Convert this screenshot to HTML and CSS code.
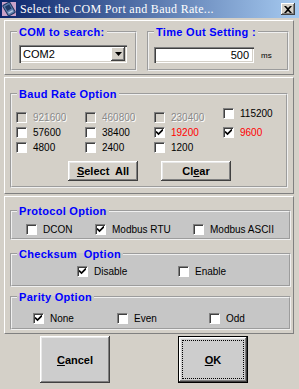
FILE: index.html
```html
<!DOCTYPE html>
<html lang="en">
<head>
<meta charset="UTF-8">
<title>Select the COM Port and Baud Rate</title>
<link rel="stylesheet" href="styles.css">
</head>
<body>
<div class="window">
    <div class="titlebar">
        <svg class="app-icon" width="14" height="14" viewBox="0 0 14 14">
            <rect x="0" y="0" width="14" height="14" fill="#c9a2c8"/>
            <g transform="rotate(-30 7 7)">
                <rect x="3" y="1" width="8" height="12" rx="1" fill="#5c7fae" stroke="#1e3560"/>
                <rect x="4.5" y="3" width="5" height="5" fill="#203a66"/>
                <rect x="4.5" y="9.5" width="5" height="1.5" fill="#b9c9e0"/>
            </g>
        </svg>
        <span class="title">Select the COM Port and Baud Rate...</span>
        <span class="close">
            <svg width="8" height="7" viewBox="0 0 8 7"><path d="M0 0h2l2 2 2-2h2L5 3.5 8 7H6L4 5 2 7H0l3-3.5z" fill="#000"/></svg>
        </span>
    </div>

    <div class="panel top-panel">
        <fieldset class="group com-group">
            <legend>COM to search:</legend>
            <div class="combo">
                <span class="combo-text">COM2</span>
                <span class="combo-btn">
                    <svg width="7" height="4" viewBox="0 0 7 4"><path d="M0 0h7L3.5 4z" fill="#000"/></svg>
                </span>
            </div>
        </fieldset>
        <fieldset class="group time-group">
            <legend>Time Out Setting :</legend>
            <div class="time-row">
                <div class="textbox">500</div>
                <span class="unit">ms</span>
            </div>
        </fieldset>
    </div>

    <div class="panel baud-panel">
        <fieldset class="group baud-group">
            <legend>Baud Rate Option</legend>
            <div class="baud-grid">
                <label class="check disabled"><span class="box"></span>921600</label>
                <label class="check disabled"><span class="box"></span>460800</label>
                <label class="check disabled"><span class="box"></span>230400</label>
                <label class="check raised"><span class="box"></span>115200</label>
                <label class="check"><span class="box"></span>57600</label>
                <label class="check"><span class="box"></span>38400</label>
                <label class="check red"><span class="box"><svg width="7" height="7" viewBox="0 0 7 7"><path d="M0 2.5l2.5 2.5L7 0.5" fill="none" stroke="#000" stroke-width="1.7"/></svg></span>19200</label>
                <label class="check red"><span class="box"><svg width="7" height="7" viewBox="0 0 7 7"><path d="M0 2.5l2.5 2.5L7 0.5" fill="none" stroke="#000" stroke-width="1.7"/></svg></span>9600</label>
                <label class="check"><span class="box"></span>4800</label>
                <label class="check"><span class="box"></span>2400</label>
                <label class="check"><span class="box"></span>1200</label>
            </div>
            <div class="baud-buttons">
                <button class="btn"><u>S</u>elect&nbsp; All</button>
                <button class="btn">Cl<u>e</u>ar</button>
            </div>
        </fieldset>
    </div>

    <div class="panel lower-panel">
        <fieldset class="group shaded protocol-group">
            <legend>Protocol Option</legend>
            <div class="options protocol-options">
                <label class="check"><span class="box"></span>DCON</label>
                <label class="check"><span class="box"><svg width="7" height="7" viewBox="0 0 7 7"><path d="M0 2.5l2.5 2.5L7 0.5" fill="none" stroke="#000" stroke-width="1.7"/></svg></span>Modbus RTU</label>
                <label class="check"><span class="box"></span>Modbus ASCII</label>
            </div>
        </fieldset>
        <fieldset class="group shaded checksum-group">
            <legend>Checksum&nbsp; Option</legend>
            <div class="options checksum-options">
                <label class="check"><span class="box"><svg width="7" height="7" viewBox="0 0 7 7"><path d="M0 2.5l2.5 2.5L7 0.5" fill="none" stroke="#000" stroke-width="1.7"/></svg></span>Disable</label>
                <label class="check"><span class="box"></span>Enable</label>
            </div>
        </fieldset>
        <fieldset class="group shaded parity-group">
            <legend>Parity Option</legend>
            <div class="options parity-options">
                <label class="check"><span class="box"><svg width="7" height="7" viewBox="0 0 7 7"><path d="M0 2.5l2.5 2.5L7 0.5" fill="none" stroke="#000" stroke-width="1.7"/></svg></span>None</label>
                <label class="check"><span class="box"></span>Even</label>
                <label class="check"><span class="box"></span>Odd</label>
            </div>
        </fieldset>
    </div>

    <div class="actions">
        <button class="btn big"><u>C</u>ancel</button>
        <button class="btn big default"><span class="focus"><u>O</u>K</span></button>
    </div>
</div>
</body>
</html>
```

FILE: styles.css
```css
* {
    box-sizing: border-box;
}
body {
    margin: 0;
    background-color: #d4d0c8;
    font-family: "Liberation Sans", Arial, sans-serif;
    font-size: 10px;
    color: #000;
}
.window {
    width: 299px;
    height: 389px;
    display: flex;
    flex-direction: column;
}
.titlebar {
    height: 18px;
    display: flex;
    align-items: center;
    padding: 0 4px 0 2px;
    background: linear-gradient(to right, #0a246a, #a6caf0);
}
.app-icon {
    flex: none;
}
.title {
    flex: 1;
    margin-left: 4px;
    color: #fff;
    font-family: "Liberation Serif", "Times New Roman", serif;
    font-size: 12px;
    letter-spacing: 0.3px;
    white-space: nowrap;
}
.close {
    width: 14px;
    height: 12px;
    display: flex;
    align-items: center;
    justify-content: center;
    background-color: #d4d0c8;
    box-shadow: inset -1px -1px #404040, inset 1px 1px #fff, inset -2px -2px #808080;
}

/* panels that hold the group boxes */
.panel {
    margin: 2px 5px 0 4px;
    border: 1px solid;
    border-color: #fff #808080 #808080 #fff;
    display: flex;
}
.top-panel {
    height: 55px;
    padding: 5px 2px 0 5px;
    gap: 10px;
}
.baud-panel {
    height: 117px;
    padding: 10px 4px 0 5px;
}
.lower-panel {
    height: 138px;
    flex-direction: column;
    padding: 8px 2px 0 5px;
}

/* group boxes */
.group {
    margin: 0;
    padding: 0;
    border: 2px groove #f0f0f0;
    min-width: 0;
}
.group legend {
    padding: 0 2px;
    margin-left: 5px;
    color: #0000ff;
    font-weight: bold;
    font-size: 11px;
    line-height: 12px;
    letter-spacing: 0.3px;
}
.shaded {
    background-color: #c6c6c6;
}
.com-group {
    width: 127px;
    height: 45px;
}
.time-group {
    width: 142px;
    height: 45px;
}
.baud-group {
    width: 278px;
    height: 100px;
}
.protocol-group {
    height: 35px;
}
.checksum-group {
    height: 39px;
    margin-top: 8px;
}
.parity-group {
    height: 39px;
    margin-top: 4px;
}

/* combo box and text box */
.combo {
    margin: 7px 0 0 7px;
    width: 108px;
    height: 18px;
    display: flex;
    align-items: center;
    background-color: #fff;
    box-shadow: inset 1px 1px #808080, inset 2px 2px #404040, inset -1px -1px #fff, inset -2px -2px #d4d0c8;
    padding: 2px;
}
.combo-text {
    flex: 1;
    padding-left: 2px;
    font-size: 11px;
}
.combo-btn {
    width: 14px;
    height: 14px;
    display: flex;
    align-items: center;
    justify-content: center;
    background-color: #d4d0c8;
    box-shadow: inset -1px -1px #404040, inset 1px 1px #fff, inset -2px -2px #808080;
}
.time-row {
    display: flex;
    align-items: center;
    margin: 9px 0 0 5px;
}
.textbox {
    width: 100px;
    height: 16px;
    padding: 2px 5px 0 0;
    text-align: right;
    font-size: 11px;
    background-color: #fff;
    box-shadow: inset 1px 1px #808080, inset 2px 2px #404040, inset -1px -1px #fff, inset -2px -2px #d4d0c8;
}
.unit {
    margin-left: 7px;
    font-size: 8px;
}

/* check boxes */
.check {
    display: flex;
    align-items: center;
    gap: 6px;
    height: 15px;
    white-space: nowrap;
}
.box {
    width: 11px;
    height: 11px;
    flex: none;
    display: flex;
    align-items: center;
    justify-content: center;
    background-color: #fff;
    border: 1px solid;
    border-color: #808080 #fff #fff #808080;
    box-shadow: inset 1px 1px #404040;
}
.check.disabled {
    color: #8a8a8a;
    text-shadow: 1px 1px #fff;
}
.check.disabled .box {
    background-color: #d4d0c8;
}
.check.red {
    color: #ff0000;
}
.check.raised {
    margin-top: -4px;
}
.baud-grid {
    display: grid;
    grid-template-columns: repeat(4, 69px);
    margin: 10px 0 0 4px;
}
.baud-buttons {
    display: flex;
    gap: 23px;
    margin: 6px 0 0 56px;
}

.options {
    display: grid;
    margin-top: 5px;
}
.protocol-options {
    grid-template-columns: 69px 98px auto;
    padding-left: 14px;
}
.checksum-options {
    grid-template-columns: 101px auto;
    padding-left: 65px;
    margin-top: 4px;
}
.parity-options {
    grid-template-columns: 84px 92px auto;
    padding-left: 21px;
    margin-top: 8px;
}

/* buttons */
.btn {
    width: 70px;
    height: 20px;
    padding: 0;
    border: none;
    font-family: "Liberation Sans", Arial, sans-serif;
    font-weight: bold;
    font-size: 11px;
    color: #000;
    background-color: #d4d0c8;
    box-shadow: inset -1px -1px #404040, inset 1px 1px #fff, inset -2px -2px #808080, inset 2px 2px #e8e8e8;
}
.actions {
    display: flex;
    gap: 68px;
    padding: 2px 0 0 40px;
}
.btn.big {
    height: 47px;
    background-color: #cdcdcd;
}
.btn.default {
    border: 1px solid #000;
    display: flex;
    align-items: center;
    justify-content: center;
    padding: 3px;
}
.focus {
    width: 100%;
    height: 100%;
    display: flex;
    align-items: center;
    justify-content: center;
    border: 1px dotted #000;
}
```
